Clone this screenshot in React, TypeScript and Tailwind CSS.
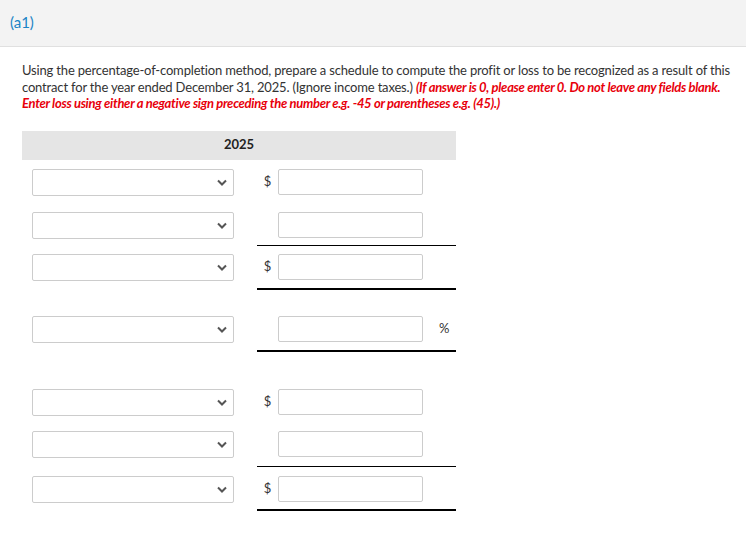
import React from 'react'

type Row = {
  dollar?: boolean
  percent?: boolean
  line?: 'thin' | 'thick'
  pt: string
  pb: string
}

const rows: Row[] = [
  { dollar: true, pt: 'pt-[9px]', pb: 'pb-[8px]' },
  { line: 'thin', pt: 'pt-[8px]', pb: 'pb-[7px]' },
  { dollar: true, line: 'thick', pt: 'pt-[8px]', pb: 'pb-[8px]' },
  { percent: true, line: 'thick', pt: 'pt-[26px]', pb: 'pb-[8px]' },
  { dollar: true, pt: 'pt-[37px]', pb: 'pb-[7px]' },
  { line: 'thin', pt: 'pt-[8px]', pb: 'pb-[9px]' },
  { dollar: true, line: 'thick', pt: 'pt-[9px]', pb: 'pb-[7px]' },
]

function Chevron() {
  return (
    <svg width="10" height="7" viewBox="0 0 10 7" className="text-[#555]">
      <path d="M1 1.5 L5 5.5 L9 1.5" fill="none" stroke="currentColor" strokeWidth="2" />
    </svg>
  )
}

export default function App() {
  return (
    <div className="w-[746px] min-h-[537px] bg-white text-[#333] font-['Lato','Liberation_Sans',sans-serif]">
      <div className="h-[47px] bg-[#f3f3f3] border-b border-[#e0e0e0] flex items-center px-[10px] pb-[2px]">
        <span className="text-[#1a84c6] text-[15px]">(a1)</span>
      </div>

      <div className="pl-[22px] pr-[10px] pt-[15px]">
        <p className="text-[13px] leading-[16.5px] tracking-[-0.17px]">
          Using the percentage-of-completion method, prepare a schedule to compute the profit or loss to be recognized as a result of this
          contract for the year ended December 31, 2025. (Ignore income taxes.){' '}
          <span className="text-[#e8000b] font-bold italic tracking-[-0.3px]">
            (If answer is 0, please enter 0. Do not leave any fields blank. Enter loss using either a negative sign preceding the number e.g. -45 or parentheses e.g. (45).)
          </span>
        </p>

        <div className="mt-[19px] w-[434px]">
          <div className="h-[29px] bg-[#e5e5e5] flex items-center justify-center text-[13px] font-bold text-[#222]">
            2025
          </div>

          {rows.map((r, i) => (
            <div key={i} className="flex">
              <div className={`w-[235px] pl-[10px] ${r.pt} ${r.pb}`}>
                <div className="w-[202px] h-[27px] border border-[#ccc] rounded-[2px] bg-white flex items-center justify-end pr-[6px]">
                  <Chevron />
                </div>
              </div>
              <div
                className={`w-[199px] flex items-start ${r.pt} ${r.pb} ${
                  r.line === 'thin' ? 'border-b border-black' : r.line === 'thick' ? 'border-b-2 border-black' : ''
                }`}
              >
                <div className="w-[21px] h-[26px] flex items-center justify-center text-[13px] text-[#333]">
                  {r.dollar ? '$' : ''}
                </div>
                <div className="w-[145px] h-[26px] border border-[#ccc] rounded-[2px] bg-white" />
                <div className="w-[33px] h-[26px] flex items-center pl-[16px] text-[13px] text-[#333]">
                  {r.percent ? '%' : ''}
                </div>
              </div>
            </div>
          ))}
        </div>
      </div>
    </div>
  )
}
